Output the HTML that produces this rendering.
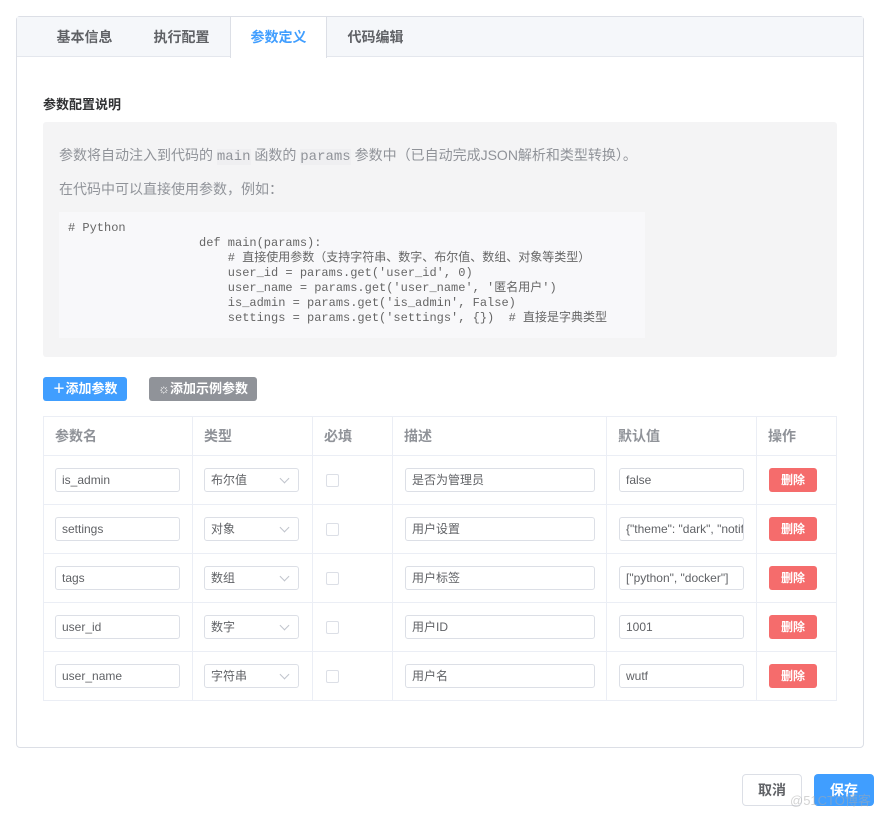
<!DOCTYPE html>
<html><head><meta charset="utf-8"><style>
*{box-sizing:border-box;margin:0;padding:0}
body{width:886px;height:816px;background:#fff;font-family:"Liberation Sans","Noto Sans CJK SC",sans-serif;font-size:13px;color:#606266;position:relative;overflow:hidden}
.card{position:absolute;left:16px;top:16px;width:848px;height:732px;border:1px solid #dcdfe6;border-radius:4px}
.tabs{position:absolute;left:0;top:0;width:846px;height:40px;background:#f5f7fa;border-bottom:1px solid #e4e7ed}
.tab{position:absolute;top:0;height:40px;line-height:40px;font-size:14px;color:#606266;font-weight:bold;text-align:center;width:97px}
.tab.act{background:#fff;color:#409eff;border-left:1px solid #dcdfe6;border-right:1px solid #dcdfe6;height:41px}
.a{position:absolute}
.code{position:absolute;left:59px;top:212px;width:586px;height:126px;background:#f8f8fa;font-family:"Liberation Mono","Noto Sans CJK SC",monospace;font-size:12px;color:#666;line-height:15px}
.code div{position:absolute;white-space:pre}
.btn{position:absolute;height:24px;line-height:24px;color:#fff;font-size:13px;font-weight:bold;border-radius:3px;text-align:center}
table{position:absolute;left:43px;top:416px;border-collapse:collapse}
td{border:1px solid #ebeef5;padding:0 0 0 11px;height:49px;font-size:14px}
tr.h td{height:39px;font-weight:bold;color:#909399}
.in{height:24px;border:1px solid #dcdfe6;border-radius:3px;line-height:22px;padding-left:6px;font-size:12px;color:#606266;white-space:nowrap;overflow:hidden;position:relative}
.sel:after{content:"";position:absolute;right:10px;top:6px;width:6px;height:6px;border-right:1px solid #c0c4cc;border-bottom:1px solid #c0c4cc;transform:rotate(45deg)}
.cb{width:13px;height:13px;border:1px solid #dcdfe6;border-radius:2px;margin-left:2px}
.del{width:48px;height:24px;background:#f56c6c;color:#fff;font-size:12px;font-weight:bold;text-align:center;line-height:24px;border-radius:3px;margin-left:1px}
</style></head><body>
<div class="card">
<div class="tabs">
<div class="tab" style="left:19px">基本信息</div>
<div class="tab" style="left:116px">执行配置</div>
<div class="tab act" style="left:213px">参数定义</div>
<div class="tab" style="left:310px">代码编辑</div>
</div>
</div>
<div class="a" style="left:43px;top:94px;font-size:13px;font-weight:bold;color:#303133">参数配置说明</div>
<div class="a" style="left:43px;top:122px;width:794px;height:235px;background:#f4f4f5;border-radius:3px"></div>
<div class="a" style="left:59px;top:145px;font-size:14px;color:#909399;white-space:nowrap">参数将自动注入到代码的 <span style="font-family:'Liberation Mono',monospace;background:#efeff1">main</span> 函数的 <span style="font-family:'Liberation Mono',monospace;background:#efeff1">params</span> 参数中（已自动完成JSON解析和类型转换）。</div>
<div class="a" style="left:59px;top:179px;font-size:14px;color:#909399">在代码中可以直接使用参数，例如：</div>
<div class="code">
<div style="left:9px;top:9px"># Python</div>
<div style="left:140px;top:24px">def main(params):
    # 直接使用参数（支持字符串、数字、布尔值、数组、对象等类型）
    user_id = params.get('user_id', 0)
    user_name = params.get('user_name', '匿名用户')
    is_admin = params.get('is_admin', False)
    settings = params.get('settings', {})  # 直接是字典类型</div>
</div>
<div class="btn" style="left:43px;top:377px;width:84px;background:#409eff">＋添加参数</div>
<div class="btn" style="left:149px;top:377px;width:108px;background:#909399">☼添加示例参数</div>
<table>
<colgroup><col style="width:149px"><col style="width:120px"><col style="width:80px"><col style="width:214px"><col style="width:150px"><col style="width:80px"></colgroup>
<tr class="h"><td>参数名</td><td>类型</td><td>必填</td><td>描述</td><td>默认值</td><td>操作</td></tr>
<tr><td><div class="in" style="width:125px">is_admin</div></td><td><div class="in sel" style="width:95px">布尔值</div></td><td><div class="cb"></div></td><td><div class="in" style="width:190px;margin-left:1px">是否为管理员</div></td><td><div class="in" style="width:125px;margin-left:1px">false</div></td><td><div class="del">删除</div></td></tr>
<tr><td><div class="in" style="width:125px">settings</div></td><td><div class="in sel" style="width:95px">对象</div></td><td><div class="cb"></div></td><td><div class="in" style="width:190px;margin-left:1px">用户设置</div></td><td><div class="in" style="width:125px;margin-left:1px">{"theme": "dark", "notifications": true}</div></td><td><div class="del">删除</div></td></tr>
<tr><td><div class="in" style="width:125px">tags</div></td><td><div class="in sel" style="width:95px">数组</div></td><td><div class="cb"></div></td><td><div class="in" style="width:190px;margin-left:1px">用户标签</div></td><td><div class="in" style="width:125px;margin-left:1px">["python", "docker"]</div></td><td><div class="del">删除</div></td></tr>
<tr><td><div class="in" style="width:125px">user_id</div></td><td><div class="in sel" style="width:95px">数字</div></td><td><div class="cb"></div></td><td><div class="in" style="width:190px;margin-left:1px">用户ID</div></td><td><div class="in" style="width:125px;margin-left:1px">1001</div></td><td><div class="del">删除</div></td></tr>
<tr><td><div class="in" style="width:125px">user_name</div></td><td><div class="in sel" style="width:95px">字符串</div></td><td><div class="cb"></div></td><td><div class="in" style="width:190px;margin-left:1px">用户名</div></td><td><div class="in" style="width:125px;margin-left:1px">wutf</div></td><td><div class="del">删除</div></td></tr>
</table>
<div class="a" style="left:742px;top:774px;width:60px;height:32px;border:1px solid #dcdfe6;border-radius:4px;text-align:center;line-height:30px;font-size:14px;font-weight:bold;color:#606266">取消</div>
<div class="a" style="left:814px;top:774px;width:60px;height:32px;background:#409eff;border-radius:4px;text-align:center;line-height:32px;font-size:14px;font-weight:bold;color:#fff">保存</div>
<div class="a" style="left:790px;top:790px;font-size:13px;color:rgba(170,170,170,0.5)">@51CTO博客</div>
</body></html>
